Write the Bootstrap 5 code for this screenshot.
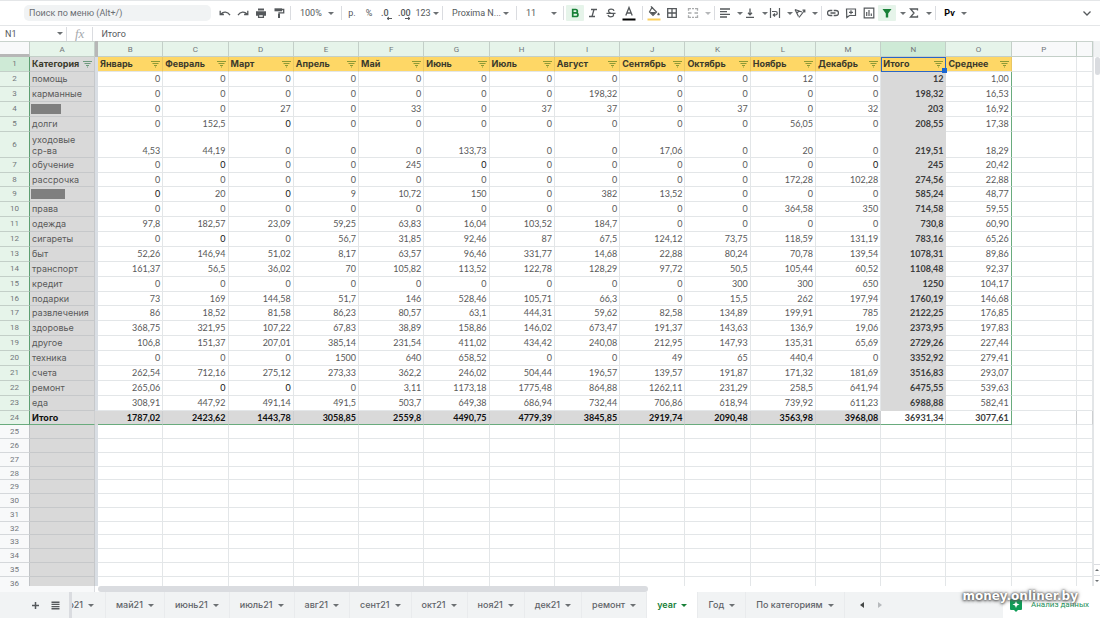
<!DOCTYPE html>
<html lang="ru">
<head>
<meta charset="utf-8">
<meta name="viewport" content="width=device-width, initial-scale=1">
<title>year</title>
<link href="https://cdn.jsdelivr.net/npm/bootstrap@5.3.0/dist/css/bootstrap.min.css" rel="stylesheet">
<style>
:root{--ink:#55595c;--line:#e3e6e8;--green:#188038;--mint:#e6f4ea;--gray:#d9d9d9}
body{font-family:Roboto,"Liberation Sans",sans-serif;font-size:9px;line-height:12px;color:var(--ink);background:#fff}
button,input,select{font:inherit;color:inherit;border:0;background:none;padding:0;border-radius:0;outline-offset:-1px}
svg{display:block;flex:none}
.ico{width:12px;height:12px;fill:none;stroke:var(--ink);stroke-width:1.3}
/* toolbar */
.tools{height:26px;border-top:1px solid #e4e6e8;border-bottom:1px solid #e4e6e8}
.search{width:187px;height:16px;margin-left:24px;margin-right:5px;border-radius:5px;background:#f1f3f4;padding:0 5px}
.search::placeholder{color:#6a6e73;opacity:1}
.vr-line{width:1px;height:14px;margin:0 2px;background:#dadce0;flex:none}
.tool{display:flex;align-items:center;justify-content:center;height:16px;width:18px;flex:none;border-radius:1px}
.tool-dd{width:25px;gap:6px;padding-left:2px}
.tool-sm{width:16px}
.tool-num{width:26px;padding-left:0;gap:2px}
.on{background:var(--mint)}
.caret{flex:none;width:0;height:0;border:3px solid transparent;border-top-color:#6c7073;border-bottom:0}
.pick{display:flex;align-items:center;padding:0 7px;flex:none}
.pick select{appearance:none;flex:1;min-width:0}
.pick .caret,.namebox .caret{pointer-events:none}
.pick-zoom{width:46px;padding-right:5px}.pick-font{width:69px;padding-right:5px}.pick-size{width:42px;padding-right:4px}
/* formula bar */
.formula{height:15px}
.namebox{width:66px;padding:0 4px 0 5px}
.namebox input{width:52px}
.fx{font:italic 13px/12px "Liberation Serif",serif;color:#a5a9ad;padding:0 8px}
/* sheet */
.grid{table-layout:fixed;width:100%;border-collapse:separate;border-spacing:0;font-family:Lato,sans-serif;color:#595959}
.grid th,.grid td{height:15px;padding:0 2px 1px;border-right:1px solid var(--line);border-bottom:1px solid var(--line);overflow:hidden;white-space:nowrap;text-align:right;line-height:11px;font-weight:400;vertical-align:middle}
.grid .top th{height:16px;padding:0;font:8px/11px Roboto,sans-serif;color:#72777a;text-align:center;background:var(--mint);border-color:#c3cfc8;border-top:1px solid #c9d3cd}
.grid tbody th{padding:0 0 1px;font:8px/11px Roboto,sans-serif;text-align:center;color:#72777a;background:var(--mint);border-bottom-color:#c3cfc8;border-right-color:#5d9f72}
.grid .plain th{background:#f8f9fa;border-right-color:#c0c3c6;border-bottom-color:#d5d8db}
.grid .top .off{background:#f8f9fa}
.grid .top .cur,.grid tbody .cur{background:#ceead6}
.grid .top .corner{background:#f8f9fa;border-bottom:3px solid #b7b7b7}
.grid tbody td:nth-child(2){text-align:left;background:var(--gray);font-family:Inter,sans-serif;border-color:#c6c8ca;white-space:normal}
.grid tbody td:nth-child(3){background:#d9dee4;border:0}
.grid .top th:nth-child(3){background:#b7b7b7;border:0}
.grid tbody tr:nth-child(8n):not(.plain) :is(td,th){height:14px;padding-bottom:0}
.grid tbody .tall td{height:26px;vertical-align:bottom}
.grid .names td,.grid tbody .names td:nth-child(2){font:bold 9px/11px Inter,sans-serif;text-align:left;color:#3b3a2c;overflow:visible}
.grid .names td:nth-child(n+4):nth-child(-n+17){background:#fed766;border-right-color:#e8c763}
.grid .names svg{width:9px;height:8px;stroke:#8d9a35;stroke-width:1;fill:none}
.grid .names td:nth-child(2) svg{stroke:#6d9a7d}
.grid .names td:nth-child(16){position:relative;outline:1px solid #2b66c4;outline-offset:-1px}
.handle{position:absolute;right:-2px;bottom:-2px;width:5px;height:5px;background:#1a67d2;z-index:1}
.grid .data td:nth-child(16){background:var(--gray);border-color:var(--gray);font-weight:700;color:#3c3c3c}
.grid tbody .used td:nth-child(17){border-right-color:#69ab7d}
.grid tbody .sum td,.grid tbody .sum th{border-bottom-color:#69ab7d}
.grid tbody .sum td{font-weight:700;color:#111;background:var(--gray);border-right-color:#cdcfd1}
.grid tbody .sum td:nth-child(n+16){background:#fff;color:#3c3c3c}
.grid tbody .sum td:nth-child(n+18){border-bottom-color:var(--line)}
.grid tbody .plain :is(td,th){height:14px}
.grid tbody .plain:nth-child(4n) :is(td,th){height:13px;padding-bottom:0}
.grid .ink{color:#111}
.hidden-name{height:10px;background:#7f7f7f;margin-left:-1px}
.vbar{width:7px;border-left:1px solid #e3e5e7}
.vbar .head{height:16px;background:#f1f3f4}
.thumb{background:#dadce0;border-radius:3px}
.vbar .thumb{height:18px;margin:0 0 0 1px}
.step{height:11px;border-top:1px solid #dadce0}
.step .caret{border-width:2px 2px 0}
.up{transform:rotate(180deg)}
.hbar{height:6px}
.hbar .thumb{width:50%;margin-left:3px}
.hbar .stub{width:95px;background:#f8f9fa;border-right:1px solid #dadce0}
/* sheet tabs */
.tabs{height:27px;background:#f1f3f4;border-bottom:1px solid #fff;font-family:Inter,sans-serif;font-weight:500;color:#5f6368}
.tabs .sheet{display:flex;align-items:center;gap:5px;padding:0 10px;border-right:1px solid #e9ebed;color:inherit;text-decoration:none;white-space:nowrap}
.tabs .sheet.first{width:37px;margin-left:5px;padding:0 11px 0 0;justify-content:flex-end;border-left:3px solid #dadce0;overflow:hidden}
.tabs .sheet.live{background:#fff;color:var(--green);font-weight:600}
.live .caret{border-top-color:var(--green)}
.arrow{border:3px solid transparent;border-right:4px solid #444746;border-left:0;width:0;height:0}
.arrow.next{border-right:0;border-left:4px solid #b7babd}
.explore{width:97px;background:#fff;color:#23915a;font:400 8px/12px Roboto,sans-serif;gap:9px;padding-left:7px}
.stamp{position:absolute;right:22px;bottom:14px;font:bold 12px/18px "DejaVu Sans",sans-serif;color:#fff;text-shadow:0 0 2px #555,0 1px 3px #555,0 0 4px #777;pointer-events:none}
</style>
</head>
<body class="vh-100 overflow-hidden d-flex flex-column position-relative">

<header class="tools d-flex align-items-center flex-shrink-0">
  <input class="search" type="search" placeholder="Поиск по меню (Alt+/)" aria-label="Поиск по меню">
  <button class="tool" aria-label="Отменить"><svg class="ico" viewBox="0 0 12 12"><path d="M1.200 3.800v3.700h3.700M2 7c2.500-2.800 6.500-2.600 9 1.200"/></svg></button>
  <button class="tool" aria-label="Повторить"><svg class="ico" viewBox="0 0 12 12"><path d="M10.800 3.800v3.700H7.100M10 7C7.500 4.200 3.500 4.400 1 8.200"/></svg></button>
  <button class="tool" aria-label="Печать"><svg class="ico" viewBox="0 0 12 12"><path d="M3 1.500h6v2H3z" fill="#55595c" stroke="none"/><path d="M1 4.200h10v4.600H9V7H3v1.800H1z" fill="#55595c" stroke="none"/><path d="M3.600 7.500h4.800v2.800H3.600z"/></svg></button>
  <button class="tool" aria-label="Копировать форматирование"><svg class="ico" viewBox="0 0 12 12"><path d="M1.500 1.300h7.500v3H1.500z" fill="#55595c" stroke="none"/><path d="M9 2.500h1.700v3.300H6V7"/><path d="M5 7h2v4H5z" fill="#55595c" stroke="none"/></svg></button>
  <span class="vr-line"></span>
  <div class="pick pick-zoom"><select aria-label="Масштаб"><option>100%</option></select><span class="caret"></span></div>
  <span class="vr-line"></span>
  <button class="tool tool-sm">р.</button>
  <button class="tool">%</button>
  <button class="tool" aria-label="Меньше знаков"><svg width="14" height="14" viewBox="0 0 14 14"><text x="1" y="10" font-size="9" font-weight="500" fill="#55595c">.0</text><path d="M7 12.500h5M9 11l-2 1.500 2 1.500" stroke="#55595c" fill="none"/></svg></button>
  <button class="tool" aria-label="Больше знаков"><svg width="14" height="14" viewBox="0 0 14 14"><text x="0" y="10" font-size="9" font-weight="500" fill="#55595c">.00</text><path d="M7 12.500h5M10 11l2 1.500-2 1.500" stroke="#55595c" fill="none"/></svg></button>
  <button class="tool tool-num">123<span class="caret"></span></button>
  <span class="vr-line"></span>
  <div class="pick pick-font"><select aria-label="Шрифт"><option>Proxima N...</option></select><span class="caret"></span></div>
  <span class="vr-line"></span>
  <div class="pick pick-size"><select aria-label="Размер шрифта"><option>11</option></select><span class="caret"></span></div>
  <span class="vr-line"></span>
  <button class="tool on" aria-label="Полужирный"><svg class="ico" viewBox="0 0 12 12"><path d="M3.700 2.500h3a1.600 1.600 0 0 1 0 3.300h-3zM3.700 5.800h3.400a1.800 1.800 0 0 1 0 3.700H3.700z" stroke="#188038" stroke-width="1.700"/></svg></button>
  <button class="tool" aria-label="Курсив"><svg class="ico" viewBox="0 0 12 12"><path d="M4 2.500h6M2 9.500h6M7 2.500l-2 7"/></svg></button>
  <button class="tool" aria-label="Зачеркнутый"><svg class="ico" viewBox="0 0 12 12"><path d="M9 3.800C8.500 1.500 3.500 1.500 3.500 4c0 1.200 1 1.600 2 1.900M1.500 6.300h9M8.300 6.800C9.800 10 4 11 3 8"/></svg></button>
  <button class="tool" aria-label="Цвет текста"><svg width="14" height="16" viewBox="0 0 14 16" fill="none" stroke="#55595c" stroke-width="1.300"><path d="M3.800 10.500 7 2.500l3.200 8M5 8h4"/><path d="M.500 14.500h13" stroke="#000" stroke-width="2"/></svg></button>
  <span class="vr-line ms-1"></span>
  <button class="tool" aria-label="Цвет заливки"><svg width="14" height="16" viewBox="0 0 14 16"><path d="M5 2.500l4.500 4.500-3.500 3.500L2.500 7z" fill="none" stroke="#55595c" stroke-width="1.200"/><path d="M3 7h6l-3 3zM11.500 7.500s1.300 1.300 1.300 2.200-2.500.9-2.500 0 1.200-2.200 1.200-2.200M4.300 1l2 2-.8.8-2-2z" fill="#55595c"/><path d="M.500 14.500h13" stroke="#fbcf5c" stroke-width="2"/></svg></button>
  <button class="tool" aria-label="Границы"><svg class="ico" viewBox="0 0 12 12"><path d="M1.700 1.700h8.600v8.600H1.700zM6 1.700v8.600M1.700 6h8.600"/></svg></button>
  <button class="tool tool-dd ms-1" aria-label="Объединить ячейки" disabled><svg class="ico opacity-50" viewBox="0 0 12 12"><path d="M4 1.700H1.500v2M8 1.700h2.500v2M4 10.300H1.500v-2M8 10.300h2.500v-2M1 6h3.500M7.500 6H11M5 1.700h2M5 10.300h2"/></svg><span class="caret opacity-50"></span></button>
  <span class="vr-line ms-1"></span>
  <button class="tool tool-dd" aria-label="Горизонтальное выравнивание"><svg class="ico" viewBox="0 0 12 12"><path d="M1 2h10M1 4.700h7M1 7.300h10M1 10h7"/></svg><span class="caret"></span></button>
  <button class="tool tool-dd" aria-label="Вертикальное выравнивание"><svg class="ico" viewBox="0 0 12 12"><path d="M2 10.300h8M6 1.500v6M4 5.800l2 2 2-2"/></svg><span class="caret"></span></button>
  <button class="tool tool-dd" aria-label="Перенос текста"><svg class="ico" viewBox="0 0 12 12"><path d="M1.500 1v10M10.500 1v10M3 4.500h3.500a1.600 1.600 0 0 1 0 3.500H4.500M6 6.500 4.300 8 6 9.500" stroke-width="1.200"/></svg><span class="caret"></span></button>
  <button class="tool tool-dd" aria-label="Поворот текста"><svg class="ico" viewBox="0 0 12 12"><path d="M1 2.500l3.500 7M1 2.500l7 2.500M3 6l2.300-2.200M5 10.500l5.500-7M8.500 3.200h2.300v2.300" stroke-width="1.200"/></svg><span class="caret"></span></button>
  <span class="vr-line ms-1"></span>
  <button class="tool" aria-label="Вставить ссылку"><svg class="ico" viewBox="0 0 12 12"><path d="M5.300 3.500H3a2.500 2.500 0 0 0 0 5h2.300M6.700 3.500H9a2.500 2.500 0 0 1 0 5H6.700M3.500 6h5"/></svg></button>
  <button class="tool" aria-label="Комментарий"><svg class="ico" viewBox="0 0 12 12"><path d="M1.500 2h9v6.500h-6l-2.700 2zM6 3.300v4M4 5.300h4" stroke-width="1.200"/></svg></button>
  <button class="tool" aria-label="Диаграмма"><svg class="ico" viewBox="0 0 12 12"><path d="M1.200 1.200h9.600v9.600H1.200zM3.700 9V5M6 9V3M8.300 9V6.500" stroke-width="1.200"/></svg></button>
  <button class="tool on" aria-label="Фильтр"><svg class="ico" viewBox="0 0 12 12"><path d="M1.500 2h9L7.200 6.500V10.500H4.800V6.500z" fill="#188038" stroke="none"/></svg></button>
  <button class="tool tool-sm w-auto ps-1" aria-label="Параметры фильтра"><span class="caret"></span></button>
  <button class="tool tool-dd" aria-label="Функции"><svg class="ico" viewBox="0 0 12 12"><path d="M9.500 3.500V2h-7L6 6l-3.500 4h7V8.500"/></svg><span class="caret"></span></button>
  <span class="vr-line ms-1"></span>
  <button class="tool tool-dd ms-1" aria-label="Ввод"><b class="text-black">Рѵ</b><span class="caret"></span></button>
  <button class="tool ms-auto me-1" aria-label="Скрыть меню"><svg class="ico" viewBox="0 0 12 12"><path d="M2.500 4.500 6 8l3.500-3.500"/></svg></button>
</header>

<div class="formula d-flex align-items-center flex-shrink-0">
  <div class="namebox d-flex align-items-center"><input value="N1" aria-label="Имя ячейки"><span class="caret"></span></div>
  <span class="vr-line m-0"></span><span class="fx">fx</span><span class="vr-line m-0"></span>
  <input class="flex-fill ps-2" value="Итого" aria-label="Формула">
</div>

<main class="d-flex flex-fill overflow-hidden">
  <div class="flex-fill overflow-hidden">
    <table class="grid">
      <colgroup><col style="width:30px"><col style="width:65px"><col style="width:3px"><col span="15"><col style="width:16px"></colgroup>
      <thead id="letters"></thead>
      <tbody id="rows"></tbody>
    </table>
  </div>
  <div class="vbar d-flex flex-column flex-shrink-0">
    <div class="head"></div><div class="thumb"></div>
    <div class="step mt-auto d-flex align-items-center justify-content-center"><span class="caret up"></span></div>
    <div class="step d-flex align-items-center justify-content-center"><span class="caret"></span></div>
  </div>
</main>
<div class="hbar d-flex flex-shrink-0"><div class="stub"></div><div class="thumb"></div></div>

<nav class="tabs d-flex flex-shrink-0" id="tabs" aria-label="Листы">
  <button class="tool h-100 ms-4 me-1 ps-1" aria-label="Добавить лист"><svg width="9" height="9" viewBox="0 0 9 9"><path d="M4.500 1v7M1 4.500h7" stroke="#55595c" stroke-width="1.500"/></svg></button>
  <button class="tool h-100" aria-label="Все листы"><svg width="9" height="9" viewBox="0 0 9 9"><path d="M.5 1.200h8M.5 3.400h8M.5 5.600h8M.5 7.800h8" stroke="#55595c" stroke-width="1.400"/></svg></button>
  <a class="sheet first" href="#">р21<span class="caret"></span></a>
</nav>
<div class="stamp">money.onliner.by</div>

<script src="https://cdn.jsdelivr.net/npm/bootstrap@5.3.0/dist/js/bootstrap.bundle.min.js"></script>
<script>
const funnel = '<svg viewBox="0 0 9 8"><path d="M0 1.500h9M1.500 3.500h6M3 5.500h3M4 7h1"/></svg>';
const names = ['Категория','Январь','Февраль','Март','Апрель','Май','Июнь','Июль','Август','Сентябрь','Октябрь','Ноябрь','Декабрь','Итого','Среднее'];
// "*" marks a value typed in black; "#n" is a hidden category n pixels wide
const data = `помощь|0|0|0|0|0|0|0|0|0|0|12|0|12|1,00
карманные|0|0|0|0|0|0|0|198,32|0|0|0|0|198,32|16,53
#30|0|0|27|0|33|0|37|37|0|37|0|32|203|16,92
долги|0|152,5|*0|0|0|0|0|0|0|0|56,05|0|208,55|17,38
уходовые ср-ва|4,53|44,19|0|0|0|133,73|0|0|17,06|0|20|0|219,51|18,29
обучение|0|*0|0|0|245|*0|0|0|0|0|0|*0|245|20,42
рассрочка|0|0|0|0|0|0|0|0|0|0|172,28|102,28|274,56|22,88
#34|*0|20|*0|9|10,72|150|0|382|13,52|0|0|0|585,24|48,77
права|0|0|0|0|0|0|0|0|0|0|364,58|350|714,58|59,55
одежда|97,8|182,57|23,09|59,25|63,83|16,04|103,52|184,7|0|0|0|0|730,8|60,90
сигареты|0|*0|0|56,7|31,85|92,46|87|67,5|124,12|73,75|118,59|131,19|783,16|65,26
быт|52,26|146,94|51,02|8,17|63,57|96,46|331,77|14,68|22,88|80,24|70,78|139,54|1078,31|89,86
транспорт|161,37|56,5|36,02|70|105,82|113,52|122,78|128,29|97,72|50,5|105,44|60,52|1108,48|92,37
кредит|0|0|0|0|0|0|0|0|0|300|300|650|1250|104,17
подарки|73|169|144,58|51,7|146|528,46|105,71|66,3|0|15,5|262|197,94|1760,19|146,68
развлечения|86|18,52|81,58|86,23|80,57|63,1|444,31|59,62|82,58|134,89|199,91|785|2122,25|176,85
здоровье|368,75|321,95|107,22|67,83|38,89|158,86|146,02|673,47|191,37|143,63|136,9|19,06|2373,95|197,83
другое|106,8|151,37|207,01|385,14|231,54|411,02|434,42|240,08|212,95|147,93|135,31|65,69|2729,26|227,44
техника|0|0|0|1500|640|658,52|0|0|49|65|440,4|0|3352,92|279,41
счета|262,54|712,16|275,12|273,33|362,2|246,02|504,44|196,57|139,57|191,87|171,32|181,69|3516,83|293,07
ремонт|265,06|*0|*0|0|3,11|1173,18|1775,48|864,88|1262,11|231,29|258,5|641,94|6475,55|539,63
еда|308,91|447,92|491,14|491,5|503,7|649,38|686,94|732,44|706,86|618,94|739,92|611,23|6988,88|582,41
Итого|1787,02|2423,62|1443,78|3058,85|2559,8|4490,75|4779,39|3845,85|2919,74|2090,48|3563,98|3968,08|36931,34|3077,61`.split('\n').map(r => r.split('|'));

const tail = '<td></td><td></td>';
document.getElementById('letters').innerHTML = '<tr class="top"><th class="corner"></th>' +
  [...'A BCDEFGHIJKLMNOP'].map(c => `<th class="${c === 'N' ? 'cur' : c === 'P' ? 'off' : ''}">${c.trim()}</th>`).join('') + '<th class="off"></th></tr>';

let html = '<tr class="names used"><th class="cur">1</th>' + names.map((n, i) =>
  `<td><div class="d-flex align-items-center justify-content-between">${n}${funnel}</div>${n === 'Итого' ? '<span class="handle"></span>' : ''}</td>${i ? '' : '<td></td>'}`).join('') + tail + '</tr>';
data.forEach((r, k) => {
  const cls = k === 22 ? 'sum' : k === 4 ? 'data tall' : 'data';
  html += `<tr class="used ${cls}"><th>${k + 2}</th>` + r.map((v, i) => {
    if (v[0] === '#') return `<td><div class="hidden-name" style="width:${v.slice(1)}px"></div></td><td></td>`;
    return `<td${v[0] === '*' ? ' class="ink"' : ''}>${v.replace('*', '')}</td>${i ? '' : '<td></td>'}`;
  }).join('') + tail + '</tr>';
});
for (let n = 25; n < 37; n++) html += `<tr class="plain"><th>${n}</th>${'<td></td>'.repeat(18)}</tr>`;
document.getElementById('rows').innerHTML = html;

document.getElementById('tabs').insertAdjacentHTML('beforeend',
  ['май21','июнь21','июль21','авг21','сент21','окт21','ноя21','дек21','ремонт','year','Год','По категориям'].map(t =>
    `<a class="sheet${t === 'year' ? ' live' : ''}" href="#">${t}<span class="caret"></span></a>`).join('') +
  `<button class="tool h-100 ms-2" aria-label="Назад"><span class="arrow"></span></button>
   <button class="tool h-100" aria-label="Вперед"><span class="arrow next"></span></button>
   <button class="explore d-flex align-items-center ms-auto flex-shrink-0"><svg width="12" height="13" viewBox="0 0 12 13"><path d="M1 0h10q1 0 1 1v9q0 1-1 1H8l-2 2-2-2H1q-1 0-1-1V1q0-1 1-1z" fill="#109d58"/><path d="M6 2l1 2.500 2.500 1L7 6.500 6 9 5 6.500l-2.500-1L5 4.500z" fill="#fff"/></svg>Анализ данных</button>`);
</script>
</body>
</html>
